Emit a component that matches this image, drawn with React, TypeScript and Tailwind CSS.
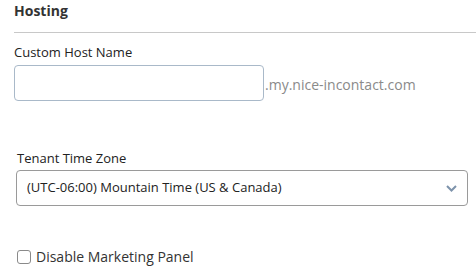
import React, { useState } from 'react';

export default function App() {
  const [hostName, setHostName] = useState('');
  const [timeZone, setTimeZone] = useState('mountain');
  const [disableMarketing, setDisableMarketing] = useState(false);

  return (
    <div className="w-[476px] h-[269px] bg-white text-[#333333] font-['Open_Sans',sans-serif] overflow-hidden">
      {/* Section header */}
      <div className="pl-[14px] pt-[1px]">
        <h2 className="text-[14px] font-bold leading-[20px] text-[#333333]">Hosting</h2>
        <div className="mt-[11px] h-px bg-[#c8c8c8]" />
      </div>

      {/* Custom host name */}
      <div className="pl-[14px] pt-[10px]">
        <label className="block text-[13px] leading-[18px] text-[#222222]">Custom Host Name</label>
        <div className="mt-[4px] flex items-end">
          <input
            value={hostName}
            onChange={(e) => setHostName(e.target.value)}
            className="w-[250px] h-[36px] rounded-[4px] border border-[#a9b9c9] px-2 text-[13px] outline-none"
          />
          <span className="ml-[1px] mb-[6px] text-[14px] leading-[20px] text-[#8a8a8a]">.my.nice-incontact.com</span>
        </div>
      </div>

      {/* Tenant time zone */}
      <div className="pl-[16px] pr-[8px] pt-[48px]">
        <label className="block pl-[1px] text-[13px] leading-[18px] text-[#222222]">Tenant Time Zone</label>
        <div className="relative mt-[3px]">
          <select
            value={timeZone}
            onChange={(e) => setTimeZone(e.target.value)}
            className="appearance-none w-[452px] h-[36px] rounded-[4px] border border-[#9a9a9a] bg-white pl-[10px] pr-8 text-[13px] text-[#222222] outline-none"
          >
            <option value="mountain">(UTC-06:00) Mountain Time (US &amp; Canada)</option>
            <option value="central">(UTC-05:00) Central Time (US &amp; Canada)</option>
          </select>
          <svg
            className="pointer-events-none absolute left-[430px] top-[15px]"
            width="11"
            height="7"
            viewBox="0 0 11 7"
            fill="none"
          >
            <path d="M1 1l4.5 4.5L10 1" stroke="#7d93ab" strokeWidth="2" />
          </svg>
        </div>
      </div>

      {/* Marketing panel */}
      <label className="mt-[41px] ml-[17px] flex items-center gap-[5px] cursor-pointer">
        <input
          type="checkbox"
          checked={disableMarketing}
          onChange={(e) => setDisableMarketing(e.target.checked)}
          className="appearance-none w-[14px] h-[14px] rounded-[3px] border border-[#8a8a8a] bg-white checked:bg-[#3b7fc4]"
        />
        <span className="text-[14px] leading-[20px] text-[#333333]">Disable Marketing Panel</span>
      </label>
    </div>
  );
}
